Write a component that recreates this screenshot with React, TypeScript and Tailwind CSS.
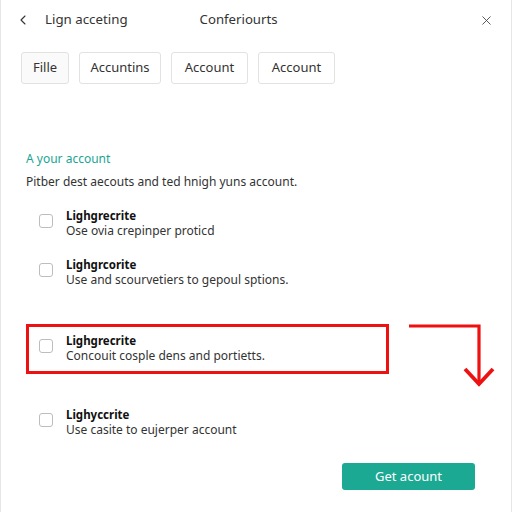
import { ChevronLeft, X } from "lucide-react";

const items = [
    { title: "Lighgrecrite", text: "Ose ovia crepinper protiсd" },
    { title: "Lighgrcorite", text: "Use and scourvetiers to gepoul sptions." },
    { title: "Lighgrecrite", text: "Concouit cosple dens and portietts.", marked: true },
    { title: "Lighyccrite", text: "Use casite to eujerper account" },
];

function Row({ title, text }: { title: string; text: string }) {
    return (
        <>
            <span className="mt-[6px] w-[14px] h-[14px] border border-[#bdbdbd] rounded-[3px] bg-white shrink-0" />
            <div className="ml-[13px]">
                <div className="text-[11.5px] font-bold leading-[15px] text-[#111]">{title}</div>
                <div className="text-[12px] leading-[16px] text-[#333]">{text}</div>
            </div>
        </>
    );
}

export default function App() {
    return (
        <main className="relative w-[512px] h-[512px] bg-white border-x border-[#e6e6e6] text-[#222] font-['Noto_Sans',sans-serif] overflow-hidden">
            <header className="flex items-center h-[40px] pl-[14px] pr-[17px]">
                <ChevronLeft size={16} strokeWidth={1.6} className="text-[#333]" />
                <span className="ml-[14px] text-[13.3px] text-[#333]">Lign acceting</span>
                <span className="ml-[72px] text-[13.2px] text-[#333]">Conferiourts</span>
                <X size={15} strokeWidth={1.4} className="ml-auto text-[#444]" />
            </header>

            <nav className="flex gap-[10px] px-[20px] mt-[12px]">
                {["Fille", "Accuntins", "Account", "Account"].map((t, i) => (
                    <button
                        key={i}
                        className={`h-[32px] border border-[#e2e2e2] rounded-[3px] text-[13px] text-[#333] ${i === 0 ? "w-[48px] bg-[#fafafa]" : i === 1 ? "w-[82px]" : "w-[77px]"}`}
                    >
                        {t}
                    </button>
                ))}
            </nav>

            <section className="px-[25px] mt-[66px]">
                <h2 className="text-[12px] text-[#1aa593] leading-[18px]">A your account</h2>
                <p className="mt-[5px] text-[12px] text-[#333] leading-[18px]">
                    Pitber dest aecouts and ted hnigh yuns account.
                </p>
            </section>

            <ul className="mt-[17px] flex flex-col">
                {items.map((it, i) =>
                    it.marked ? (
                        <li
                            key={i}
                            className="ml-[25px] w-[363px] h-[50px] border-[3px] border-[#ee1111] flex items-start pt-[6px] pl-[10px] mt-[36px] mb-[33px]"
                        >
                            <Row title={it.title} text={it.text} />
                        </li>
                    ) : (
                        <li key={i} className={`ml-[38px] flex items-start ${i === 0 ? "mb-[18px]" : ""}`}>
                            <Row title={it.title} text={it.text} />
                        </li>
                    )
                )}
            </ul>

            <svg className="absolute left-[405px] top-[320px]" width="90" height="70" viewBox="0 0 90 70">
                <path d="M3 6 H73 V62" fill="none" stroke="#ee1111" strokeWidth="3.2" />
                <path d="M59 49 L73 64 L87 49" fill="none" stroke="#ee1111" strokeWidth="3.8" />
            </svg>

            <div className="flex justify-end pr-[36px] mt-[25px]">
                <button className="w-[133px] h-[27px] bg-[#1ba994] rounded-[3px] text-white text-[13px]">
                    Get acount
                </button>
            </div>
        </main>
    );
}
